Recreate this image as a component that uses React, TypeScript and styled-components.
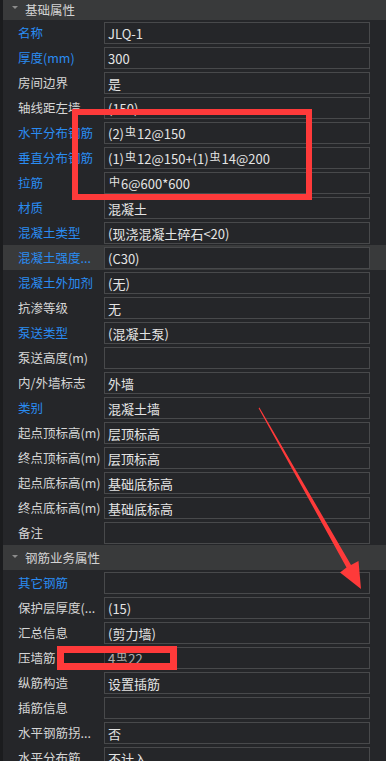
import React from 'react';
import styled, { createGlobalStyle } from 'styled-components';

const GlobalStyle = createGlobalStyle`
  html, body {
    margin: 0;
    padding: 0;
    background: #252629;
    overflow: hidden;
  }
  * { box-sizing: border-box; }
`;

/* ── Panel ── */
const Page = styled.div`
  position: relative;
  width: 386px;
  height: 761px;
  overflow: hidden;
  background: #252629;
  border-left: 3px solid #1b1c1e;
  font-family: "Noto Sans CJK SC", "Noto Sans", sans-serif;
  font-size: 13px;
  display: flex;
  flex-direction: column;
`;

const GroupHeader = styled.div<{ $first?: boolean }>`
  flex-shrink: 0;
  height: 25px;
  margin-top: ${p => (p.$first ? '-5px' : '0')};
  padding-top: ${p => (p.$first ? '3px' : '0')};
  display: flex;
  align-items: center;
  gap: 7px;
  padding-left: 9px;
  background: #393a3b;
  color: #d4d4d4;
  font-size: 12.5px;
`;

const Caret = styled.span`
  width: 0;
  height: 0;
  margin-top: -3px;
  border-left: 3px solid transparent;
  border-right: 3px solid transparent;
  border-top: 3px solid #8c8c8c;
`;

const Row = styled.div<{ $selected?: boolean }>`
  flex-shrink: 0;
  height: 25px;
  display: flex;
  align-items: center;
  background: ${p => (p.$selected ? '#393a3b' : 'transparent')};
`;

const Label = styled.div<{ $blue?: boolean }>`
  width: 101px;
  padding-left: 15px;
  white-space: nowrap;
  overflow: hidden;
  font-size: 12.5px;
  color: ${p => (p.$blue ? '#2a8cf2' : '#d6d6d6')};
`;

const ValueBox = styled.div`
  width: 266px;
  height: 22px;
  margin-top: 2px;
  margin-bottom: 1px;
  display: flex;
  align-items: center;
  padding-left: 3px;
  border: 1px solid #48494b;
  background: #252629;
  color: #e4e4e4;
  white-space: nowrap;
  overflow: hidden;
`;

const Bar = styled.span`
  font-size: 11px;
  line-height: 1;
  position: relative;
  top: -2px;
  margin: 0 1px;
`;

/* ── Annotations ── */
const RedFrame = styled.div<{ $x: number; $y: number; $w: number; $h: number; $b: number }>`
  position: absolute;
  left: ${p => p.$x}px;
  top: ${p => p.$y}px;
  width: ${p => p.$w}px;
  height: ${p => p.$h}px;
  border: ${p => p.$b}px solid #fe3a3a;
  pointer-events: none;
`;

const MaskedFrame = styled(RedFrame)`
  background: rgba(10, 10, 10, 0.25);
`;

const ArrowLayer = styled.svg`
  position: absolute;
  left: -3px;
  top: 0;
  pointer-events: none;
`;

type Item = { label: string; value?: React.ReactNode; blue?: boolean; selected?: boolean };

const HRB = () => <Bar>虫</Bar>;
const HPB = () => <Bar>中</Bar>;

const basic: Item[] = [
  { label: '名称', value: 'JLQ-1', blue: true },
  { label: '厚度(mm)', value: '300', blue: true },
  { label: '房间边界', value: '是' },
  { label: '轴线距左墙', value: '(150)' },
  { label: '水平分布钢筋', value: <>(2)<HRB />12@150</>, blue: true },
  { label: '垂直分布钢筋', value: <>(1)<HRB />12@150+(1)<HRB />14@200</>, blue: true },
  { label: '拉筋', value: <><HPB />6@600*600</>, blue: true },
  { label: '材质', value: '混凝土', blue: true },
  { label: '混凝土类型', value: '(现浇混凝土碎石<20)', blue: true },
  { label: '混凝土强度...', value: '(C30)', blue: true, selected: true },
  { label: '混凝土外加剂', value: '(无)', blue: true },
  { label: '抗渗等级', value: '无' },
  { label: '泵送类型', value: '(混凝土泵)', blue: true },
  { label: '泵送高度(m)', value: '' },
  { label: '内/外墙标志', value: '外墙' },
  { label: '类别', value: '混凝土墙', blue: true },
  { label: '起点顶标高(m)', value: '层顶标高' },
  { label: '终点顶标高(m)', value: '层顶标高' },
  { label: '起点底标高(m)', value: '基础底标高' },
  { label: '终点底标高(m)', value: '基础底标高' },
  { label: '备注', value: '' },
];

const rebar: Item[] = [
  { label: '其它钢筋', value: '', blue: true },
  { label: '保护层厚度(...', value: '(15)' },
  { label: '汇总信息', value: '(剪力墙)' },
  { label: '压墙筋', value: <>4<HRB />22</> },
  { label: '纵筋构造', value: '设置插筋' },
  { label: '插筋信息', value: '' },
  { label: '水平钢筋拐...', value: '否' },
  { label: '水平分布筋', value: '不计入' },
];

function PropRow({ item }: { item: Item }) {
  return (
    <Row $selected={item.selected}>
      <Label $blue={item.blue}>{item.label}</Label>
      <ValueBox>{item.value}</ValueBox>
    </Row>
  );
}

export default function App() {
  return (
    <>
      <GlobalStyle />
      <Page>
        <GroupHeader $first>
          <Caret />
          基础属性
        </GroupHeader>
        {basic.map(item => (
          <PropRow key={item.label} item={item} />
        ))}

        <GroupHeader>
          <Caret />
          钢筋业务属性
        </GroupHeader>
        {rebar.map(item => (
          <PropRow key={item.label} item={item} />
        ))}

        {/* red markup drawn over the screenshot */}
        <RedFrame $x={69} $y={109} $w={240} $h={91} $b={6} />
        <MaskedFrame $x={54} $y={646} $w={120} $h={24} $b={7} />
        <ArrowLayer width="386" height="761" viewBox="0 0 386 761">
          <polygon
            points="259.4,407.6 351,565 358.5,561 361,589 340,572.5 346.5,567.5 258.6,408.2"
            fill="#fe3a3a"
          />
        </ArrowLayer>
      </Page>
    </>
  );
}
